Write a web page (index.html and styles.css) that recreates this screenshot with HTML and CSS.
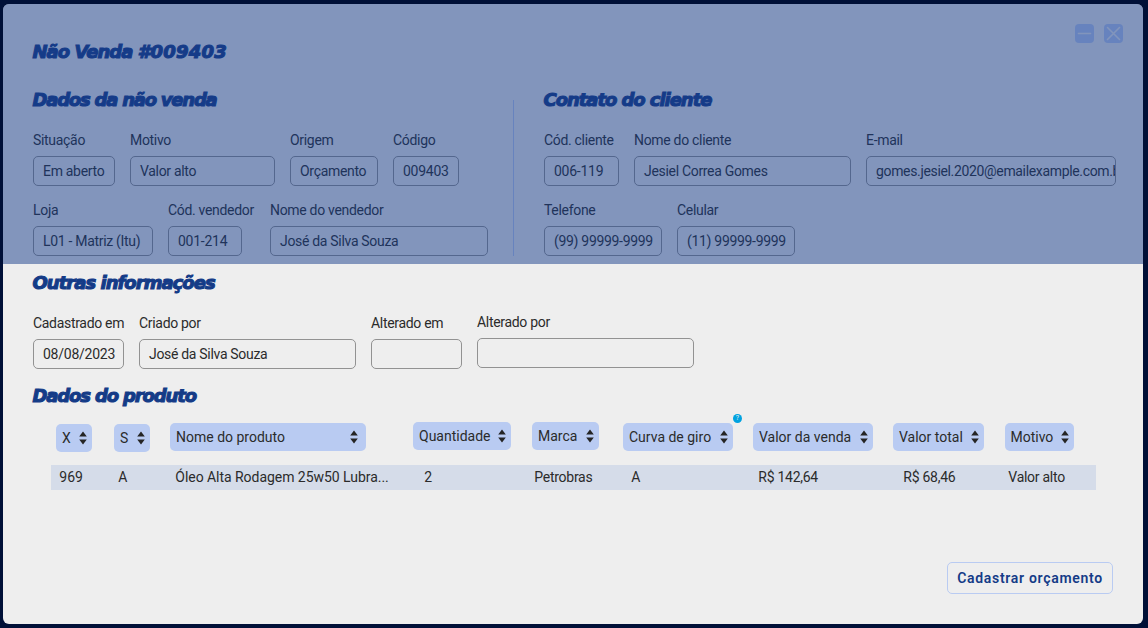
FILE: index.html
```html
<!DOCTYPE html>
<html lang="pt-BR">
<head>
<meta charset="utf-8">
<title>Não Venda #009403</title>
<link rel="stylesheet" href="styles.css">
</head>
<body>
<svg class="sprite" width="0" height="0">
  <symbol id="sort" viewBox="0 0 8 14"><path d="M4 0.5 7.8 5.5H0.2ZM0.2 8.5H7.8L4 13.5Z"/></symbol>
</svg>
<main class="window">
  <header class="titlebar">
    <h1 class="heading title">Não Venda <span class="number">#009403</span></h1>
    <div class="window-actions">
      <button class="window-button" aria-label="Minimizar"><svg viewBox="0 0 19 19"><path d="M3.5 9.5H15.5"/></svg></button>
      <button class="window-button" aria-label="Fechar"><svg viewBox="0 0 19 19"><path d="M3.5 3.5 15.5 15.5M15.5 3.5 3.5 15.5"/></svg></button>
    </div>
  </header>
  <div class="columns">
    <section class="sale">
      <h2 class="heading h-sale">Dados da não venda</h2>
      <div class="fields">
        <div class="field w82"><label>Situação</label><div class="input">Em aberto</div></div>
        <div class="field w145"><label>Motivo</label><div class="input">Valor alto</div></div>
        <div class="field w88"><label>Origem</label><div class="input">Orçamento</div></div>
        <div class="field w66"><label>Código</label><div class="input code">009403</div></div>
      </div>
      <div class="fields">
        <div class="field w120"><label>Loja</label><div class="input">L01 - Matriz (Itu)</div></div>
        <div class="field w74 seller-code"><label>Cód. vendedor</label><div class="input code">001-214</div></div>
        <div class="field w218"><label>Nome do vendedor</label><div class="input">José da Silva Souza</div></div>
      </div>
    </section>
    <section class="client">
      <h2 class="heading h-client">Contato do cliente</h2>
      <div class="fields">
        <div class="field w75"><label>Cód. cliente</label><div class="input code">006-119</div></div>
        <div class="field w217"><label>Nome do cliente</label><div class="input">Jesiel Correa Gomes</div></div>
        <div class="field w250"><label>E-mail</label><div class="input email">gomes.jesiel.2020@emailexample.com.br</div></div>
      </div>
      <div class="fields">
        <div class="field w118"><label>Telefone</label><div class="input">(99) 99999-9999</div></div>
        <div class="field w118"><label>Celular</label><div class="input">(11) 99999-9999</div></div>
      </div>
    </section>
  </div>
  <section class="other">
    <h2 class="heading h-other">Outras informações</h2>
    <div class="fields">
      <div class="field w91"><label>Cadastrado em</label><div class="input code">08/08/2023</div></div>
      <div class="field w217"><label>Criado por</label><div class="input">José da Silva Souza</div></div>
      <div class="field w91"><label>Alterado em</label><div class="input"></div></div>
      <div class="field w217 raised"><label>Alterado por</label><div class="input"></div></div>
    </div>
  </section>
  <section class="product">
    <h2 class="heading h-product">Dados do produto</h2>
    <div class="sorters">
      <button class="sorter c-x">X<svg><use href="#sort"/></svg></button>
      <button class="sorter c-s">S<svg><use href="#sort"/></svg></button>
      <button class="sorter c-name">Nome do produto<svg><use href="#sort"/></svg></button>
      <button class="sorter c-qty">Quantidade<svg><use href="#sort"/></svg></button>
      <button class="sorter c-brand">Marca<svg><use href="#sort"/></svg></button>
      <button class="sorter c-curve">Curva de giro<svg><use href="#sort"/></svg><span class="help">?</span></button>
      <button class="sorter c-value">Valor da venda<svg><use href="#sort"/></svg></button>
      <button class="sorter c-total">Valor total<svg><use href="#sort"/></svg></button>
      <button class="sorter c-reason">Motivo<svg><use href="#sort"/></svg></button>
    </div>
    <div class="row">
      <span class="num">969</span><span>A</span><span class="name">Óleo Alta Rodagem 25w50 Lubra...</span><span class="num">2</span><span>Petrobras</span><span>A</span><span>R$ 142,64</span><span>R$ 68,46</span><span>Valor alto</span>
    </div>
  </section>
  <footer class="footer"><button class="primary">Cadastrar orçamento</button></footer>
  <div class="shade"></div>
</main>
</body>
</html>
```

FILE: styles.css
```css
* { box-sizing: border-box; }
body {
  margin: 0;
  height: 628px;
  padding: 4px 5px 4px 3px;
  overflow: hidden;
  background: #001037;
  font: 14px/16px Roboto, "Liberation Sans", sans-serif;
  color: #2b2b2b;
}
button { font: inherit; color: inherit; border: 0; margin: 0; padding: 0; }
.sprite { position: absolute; }
.window {
  position: relative;
  height: 620px;
  border-radius: 6px;
  overflow: hidden;
  background: #eee;
}
.shade {
  position: absolute;
  inset: 0 0 auto 0;
  height: 260.3px;
  background: rgba(22, 60, 138, .5);
}
.heading {
  margin: 0;
  padding-top: 1px;
  height: 20px;
  font: italic bold 18px/20px "DejaVu Sans", sans-serif;
  color: #143b87;
  white-space: nowrap;
  -webkit-text-stroke: 1.1px #143b87;
}
.title { letter-spacing: -.95px; margin-top: 17px; }
.number { letter-spacing: .2px; }
.h-sale { letter-spacing: -1.22px; }
.h-client { letter-spacing: -1.05px; }
.h-other { letter-spacing: -.97px; }
.h-product { letter-spacing: -1.14px; }
.titlebar {
  display: flex;
  justify-content: space-between;
  align-items: flex-start;
  padding: 20px 20px 0 29.5px;
}
.window-actions { display: flex; gap: 10px; }
.window-button {
  width: 19px;
  height: 19px;
  border-radius: 4px;
  background: #b9cbf2;
}
.window-button svg { display: block; fill: none; stroke: #eee; stroke-width: 1.6; stroke-linecap: round; }
.columns { display: flex; padding: 28px 0 0 30px; }
.sale { width: 511px; position: relative; }
.sale::after {
  content: "";
  position: absolute;
  left: 480px;
  top: 11px;
  width: 1px;
  height: 156px;
  background: #b9cbf2;
}
.columns .heading, .other .heading, .product .heading { margin-left: -.5px; }
.columns .heading { margin-bottom: 23px; }
.fields { display: flex; gap: 15px; height: 54px; letter-spacing: -.31px; }
.fields + .fields { margin-top: 16px; }
.field label { display: block; margin-bottom: 8px; white-space: nowrap; }
.input {
  height: 30px;
  padding: 6px 0 0 9px;
  border: 1px solid #929292;
  border-radius: 5px;
  overflow: hidden;
  white-space: nowrap;
}
.code { letter-spacing: -.25px; }
.email { letter-spacing: -.34px; }
.w66 { width: 66px; }
.w74 { width: 74px; }
.w75 { width: 75px; }
.w82 { width: 82px; }
.w88 { width: 88px; }
.w91 { width: 91px; }
.w118 { width: 118px; }
.w120 { width: 120px; }
.w145 { width: 145px; }
.w217 { width: 217px; }
.w218 { width: 218px; }
.w250 { width: 250px; }
.seller-code { margin-right: 13px; }
.other { padding: 16px 0 0 30px; }
.other .heading { margin-bottom: 23px; }
.raised { margin-top: -1.5px; }
.product { padding: 16px 0 0 30px; }
.sorters { display: flex; margin: 17px 0 0 23px; height: 43px; }
.sorter {
  position: relative;
  display: flex;
  flex: none;
  justify-content: space-between;
  align-items: center;
  height: 28px;
  padding: 0 5.5px 0 6px;
  border-radius: 5px;
  background: #b9cbf2;
}
.sorter svg { width: 8px; height: 14px; fill: #252525; }
.c-x { width: 36px; margin-top: 2px; }
.c-s { width: 36px; margin: 2px 0 0 22px; }
.c-name { width: 196px; margin: 1px 0 0 20px; padding-right: 8.5px; }
.c-qty { width: 98px; margin: -.5px 0 0 47px; }
.c-brand { width: 67px; margin: 0 0 0 21px; }
.c-curve { width: 110px; margin: 1px 0 0 24px; }
.c-value { width: 120px; margin: 1px 0 0 20px; }
.c-total { width: 91px; margin: 1px 0 0 20px; }
.c-reason { width: 69.5px; margin: 1px 0 0 20.5px; }
.help {
  position: absolute;
  top: -9px;
  right: -9px;
  width: 9px;
  height: 9px;
  border-radius: 50%;
  background: #00a2e0;
  color: #eee;
  font-size: 7px;
  line-height: 9px;
  text-align: center;
}
.row {
  display: grid;
  grid-template-columns: 59px 57px 249px 110px 97px 127px 145px 105px 1fr;
  width: 1045px;
  height: 25px;
  margin-left: 17.5px;
  padding-left: 8.8px;
  background: #d5dce9;
  line-height: 25px;
  letter-spacing: -.27px;
}
.num { letter-spacing: 0; }
.name { letter-spacing: -.04px; }
.footer { display: flex; justify-content: flex-end; padding: 72px 30px 0 0; }
.primary {
  width: 166px;
  height: 32px;
  border: 1px solid #b9cbf2;
  border-radius: 5px;
  background: transparent;
  color: #143b87;
  font-weight: 600;
  letter-spacing: .7px;
}
```
